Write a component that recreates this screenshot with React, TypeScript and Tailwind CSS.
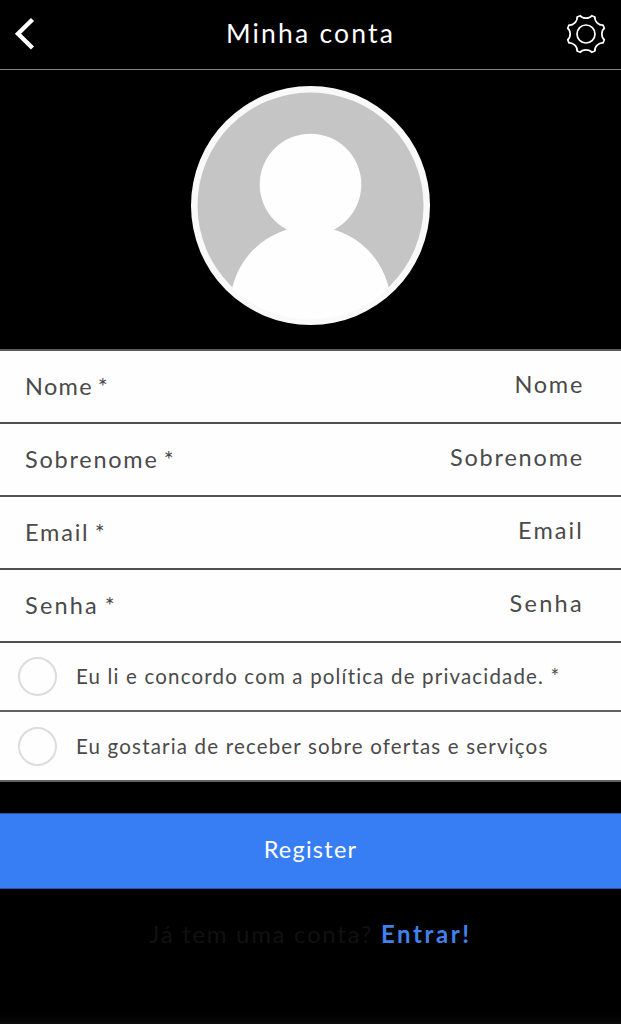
const fields = [
  { label: "Nome *", value: "Nome", left: "tracking-[1.3px]", right: "tracking-[1.7px]" },
  { label: "Sobrenome *", value: "Sobrenome", left: "tracking-[1.75px]", right: "tracking-[1.8px]" },
  { label: "Email *", value: "Email", left: "tracking-[1.8px]", right: "tracking-[2.1px]" },
  { label: "Senha *", value: "Senha", left: "tracking-[2.2px]", right: "tracking-[2.3px]" },
];

const consents = [
  { text: "Eu li e concordo com a política de privacidade. *", row: "h-[69px]", spacing: "tracking-[1.17px]" },
  { text: "Eu gostaria de receber sobre ofertas e serviços", row: "h-[70px]", spacing: "tracking-[1.18px]" },
];

function point(radius: number, degrees: number) {
  const a = (degrees * Math.PI) / 180;
  return `${(20 + radius * Math.cos(a)).toFixed(2)} ${(20 + radius * Math.sin(a)).toFixed(2)}`;
}

// Eight teeth with a rounded hollow between each pair
function gearPath() {
  let d = "";
  for (let i = 0; i < 8; i++) {
    const mid = i * 45 + 22.5;
    d += `${i === 0 ? "M" : "L"}${point(19.2, mid - 5)} L${point(19.2, mid + 5)} `;
    d += `C${point(15.4, mid + 10)} ${point(15.4, mid + 35)} ${point(19.2, mid + 40)} `;
  }
  return d + "Z";
}

function Header() {
  return (
    <header className="flex h-[70px] items-center justify-between border-b border-[#858585] pr-[15px] pb-[2px] pl-[13px]">
      <button className="w-10" aria-label="Voltar">
        <svg width="24" height="34" viewBox="0 0 24 34" fill="none" stroke="#fff" strokeWidth="4.4">
          <path d="M19.5 2.5 5 16.7 19.5 31" />
        </svg>
      </button>
      <h1 className="pl-0.5 text-[26.5px] tracking-[2.2px] text-white">Minha conta</h1>
      <button className="flex w-10 justify-end" aria-label="Ajustes">
        <svg width="40" height="40" viewBox="0 0 40 40" fill="none" stroke="#fff" strokeWidth="1.7" strokeLinejoin="round">
          <path d={gearPath()} />
          <circle cx="20" cy="20" r="9" />
        </svg>
      </button>
    </header>
  );
}

function Avatar() {
  return (
    <div className="flex h-[279px] justify-center pt-4">
      <svg width="240" height="240" viewBox="0 0 240 240">
        <defs>
          <clipPath id="avatar">
            <circle cx="119.5" cy="119.5" r="114" />
          </clipPath>
        </defs>
        <circle cx="119.5" cy="119.5" r="119.5" fill="#f9f9f9" />
        <circle cx="119.5" cy="119.5" r="113" fill="#c5c5c5" />
        <g fill="#fefefe" clipPath="url(#avatar)">
          <circle cx="119.5" cy="98.5" r="50.8" />
          <circle cx="119.5" cy="220.5" r="80.5" />
        </g>
      </svg>
    </div>
  );
}

export default function App() {
  return (
    <main className="flex h-[1024px] w-full flex-col overflow-hidden bg-black font-['Lato',sans-serif] text-[#4a4a4a]">
      <Header />
      <Avatar />

      <section className="border-t-2 border-[#5c5c5c] bg-[#fefefe]">
        {fields.map((f) => (
          <div key={f.value} className="flex h-[73px] items-center justify-between border-b-2 border-[#505050] pr-[37px] pb-px pl-[25px] text-[23.5px]">
            <label className={`pt-0.5 [word-spacing:-2.5px] ${f.left}`}>{f.label}</label>
            <span className={`pb-0.5 ${f.right}`}>{f.value}</span>
          </div>
        ))}
        {consents.map((c) => (
          <label key={c.text} className={`flex items-center gap-[19px] border-b-2 border-[#626262] pl-[18px] text-[20.5px] ${c.row}`}>
            <span className="size-[39px] shrink-0 rounded-full border-2 border-[#dcdcdc]" />
            <span className={`whitespace-nowrap ${c.spacing}`}>{c.text}</span>
          </label>
        ))}
      </section>

      <button className="mt-[31px] h-[76px] w-full shrink-0 border-y border-[#2355ad] bg-[#377ef5] pb-0.5 text-[23.5px] tracking-[1.25px] text-white">
        Register
      </button>

      <p className="mt-[27px] text-center text-[24px] tracking-[1.7px] whitespace-nowrap text-[#111111]">
        Já tem uma conta? <a className="font-bold tracking-[2.6px] text-[#4280ed]">Entrar!</a>
      </p>

      <div className="mt-auto h-4 shrink-0 bg-linear-to-b from-black to-[#0c0c0c]" />
    </main>
  );
}
